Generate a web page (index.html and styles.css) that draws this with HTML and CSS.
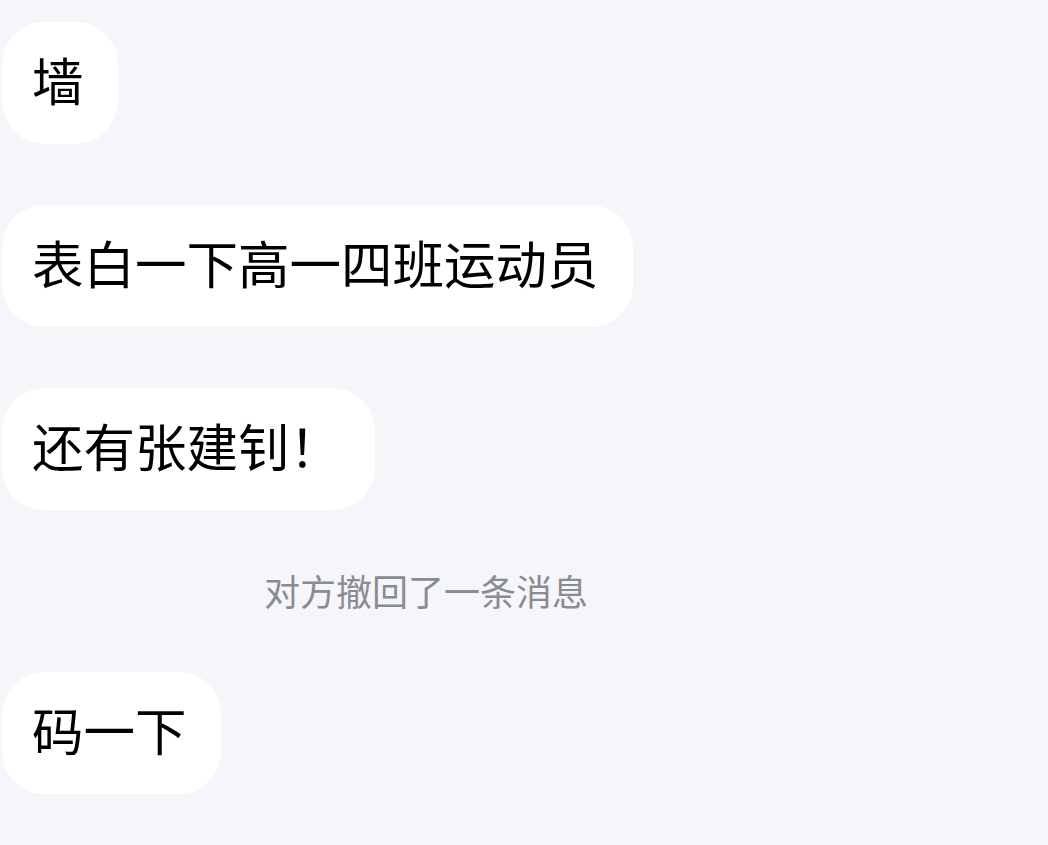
FILE: index.html
```html
<!DOCTYPE html>
<html>
  <head>
    <meta charset="UTF-8">
    <title>聊天</title>
    <link rel="stylesheet" href="styles.css">
  </head>
  <body>
    <div class="chat">
      <div class="msg"><span class="bubble">墙</span></div>
      <div class="msg"><span class="bubble">表白一下高一四班运动员</span></div>
      <div class="msg"><span class="bubble">还有张建钊！</span></div>
      <div class="notice">对方撤回了一条消息</div>
      <div class="msg"><span class="bubble">码一下</span></div>
    </div>
  </body>
</html>
```

FILE: styles.css
```css
body {
  margin: 0;
  padding: 0;
  background-color: #f5f6fa;
  font-family: "Noto Sans CJK SC", "Noto Sans", sans-serif;
}

.chat {
  display: flex;
  flex-direction: column;
  align-items: flex-start;
  padding-top: 22px;
}

.msg {
  margin-bottom: 61px;
}

.bubble {
  display: inline-block;
  margin-left: 2px;
  padding: 0 34px 8px 30px;
  height: 114px;
  line-height: 114px;
  font-size: 51.5px;
  color: #000;
  background-color: #ffffff;
  border-radius: 42px;
}

.notice {
  margin: -6px 0 57px 264px;
  height: 50px;
  line-height: 50px;
  font-size: 36px;
  color: #8b8b93;
}
```
